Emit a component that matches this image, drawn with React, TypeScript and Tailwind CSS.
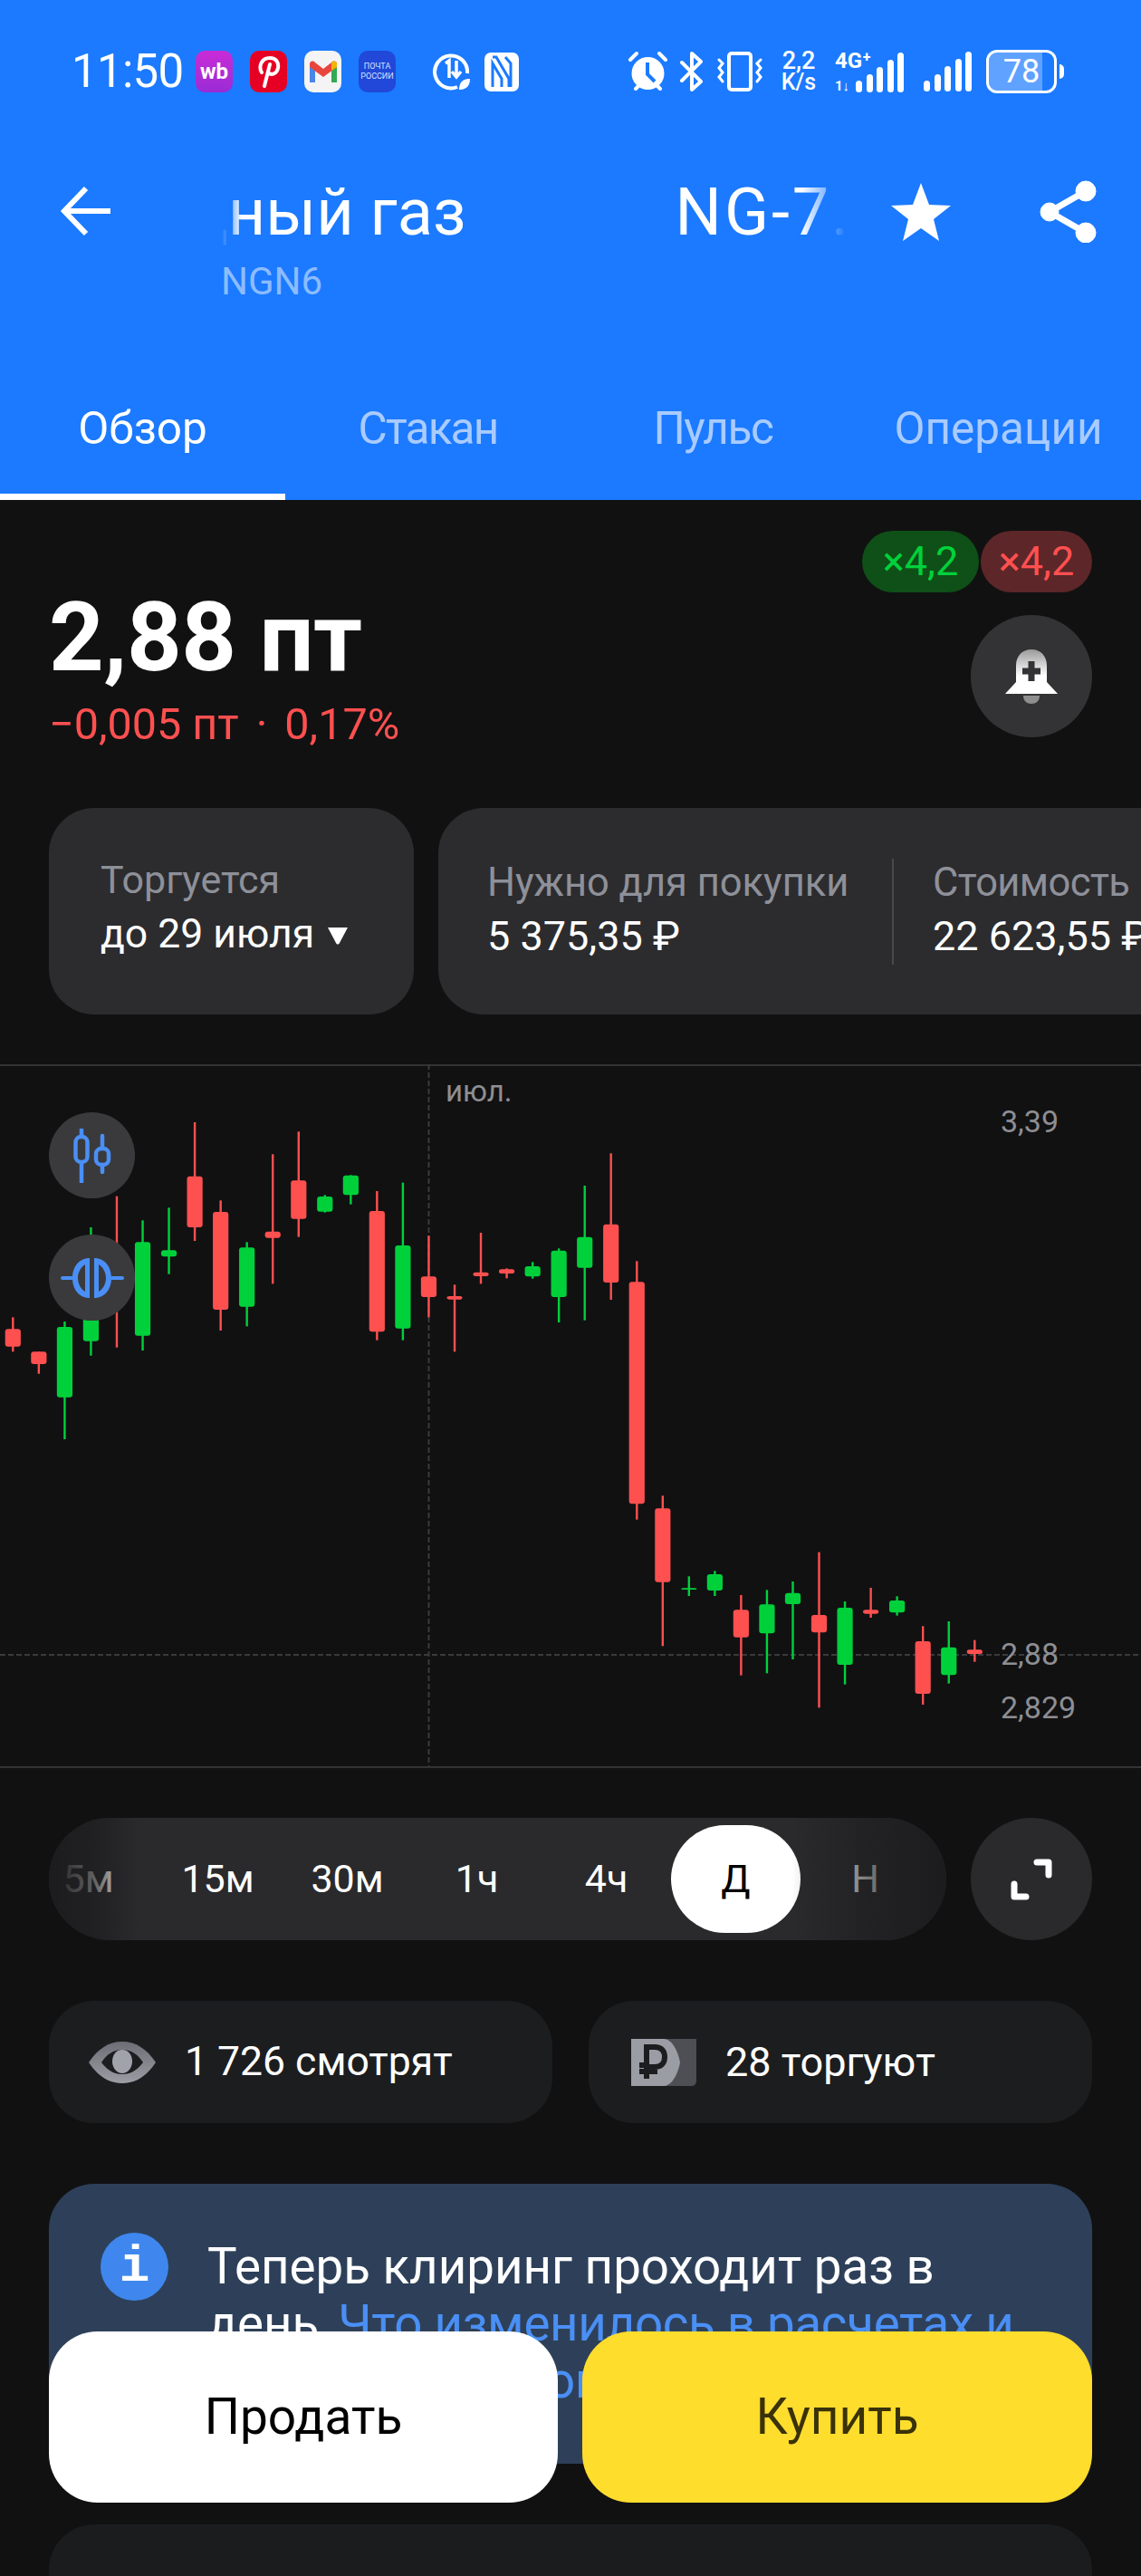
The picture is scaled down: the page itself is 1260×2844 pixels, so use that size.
import React from "react";

type C = [number, number, number, number, number, "r" | "g"];
const RED = "#ff5050";
const GREEN = "#00d13b";

// zoomed coordinates of candles: x*2.45, (y-1160)*3
const A: C[] = [
  [35, 883, 997, 922, 980, "r"],
  [105, 997, 1070, 997, 1038, "r"],
  [175, 897, 1287, 915, 1148, "g"],
  [246, 585, 1010, 780, 962, "g"],
  [316, 482, 983, 700, 800, "r"],
  [386, 562, 993, 634, 944, "g"],
  [457, 520, 740, 661, 682, "g"],
  [527, 237, 630, 416, 585, "r"],
  [597, 496, 927, 534, 858, "r"],
  [668, 634, 913, 652, 848, "g"],
  [738, 343, 772, 599, 620, "r"],
  [808, 268, 617, 430, 557, "r"],
  [879, 478, 536, 483, 533, "g"],
  [949, 412, 509, 413, 478, "g"],
  [1020, 465, 959, 531, 931, "r"],
  [1090, 437, 959, 645, 920, "g"],
  [1160, 613, 883, 748, 816, "r"],
  [1230, 775, 997, 813, 824, "r"],
  [1301, 603, 772, 734, 747, "r"],
  [1371, 721, 754, 724, 738, "r"],
  [1441, 700, 755, 714, 748, "g"],
  [1512, 655, 900, 662, 816, "g"],
];
const B: C[] = [
  [63, 447, 893, 617, 719, "g"],
  [134, 340, 825, 575, 768, "r"],
  [204, 697, 1553, 766, 1501, "r"],
  [274, 1474, 1972, 1516, 1760, "r"],
  [345, 1741, 1806, 1780, 1785, "g"],
  [415, 1723, 1806, 1734, 1788, "g"],
  [486, 1803, 2069, 1852, 1943, "r"],
  [556, 1786, 2062, 1834, 1930, "g"],
  [626, 1758, 2016, 1796, 1833, "g"],
  [697, 1661, 2176, 1869, 1927, "r"],
  [767, 1824, 2099, 1845, 2034, "g"],
  [837, 1779, 1878, 1852, 1865, "r"],
  [908, 1807, 1871, 1821, 1861, "g"],
  [978, 1906, 2166, 1956, 2130, "r"],
  [1048, 1890, 2096, 1976, 2068, "g"],
  [1118, 1952, 2024, 1984, 1998, "r"],
];
const TOP = 1175;
const toY = (y: number) => 1160 + y / 3 - TOP;
const candles = [
  ...A.map((c) => ({ x: c[0] / 2.45, c })),
  ...B.map((c) => ({ x: 620 + c[0] / 2.45, c })),
];

function Chart() {
  return (
    <svg className="absolute left-0 top-[-2px]" width={1260} height={775} viewBox="0 0 1260 775">
      <line x1={473.5} x2={473.5} y1={0} y2={775} stroke="#3a3a3c" strokeWidth={2} strokeDasharray="6 3" />
      <line x1={0} x2={1260} y1={652} y2={652} stroke="#3a3a3c" strokeWidth={2} strokeDasharray="6 3" />
      {candles.map(({ x, c }, i) => {
        const col = c[5] === "r" ? RED : GREEN;
        return (
          <g key={i}>
            <rect x={x - 1.2} width={2.4} y={toY(c[1])} height={toY(c[2]) - toY(c[1])} fill={col} />
            <rect x={x - 8.6} width={17.2} y={toY(c[3])} height={toY(c[4]) - toY(c[3])} rx={3} fill={col} />
          </g>
        );
      })}
    </svg>
  );
}

function StatusLeft() {
  return (
    <div className="flex items-center">
      <span className="w-[118px] text-[51px] leading-[50px] tracking-[-0.7px] text-white">11:50</span>
      <div className="ml-[19px] flex h-[46px] w-[41px] items-center justify-center rounded-[10px] bg-gradient-to-b from-[#c92bd6] to-[#9a2bd6] text-[24px] font-bold leading-none text-white">wb</div>
      <div className="ml-[19px] flex h-[46px] w-[41px] items-center justify-center rounded-[10px] bg-[#e60023]">
        <svg width="26" height="36" viewBox="0 0 26 36" fill="none" stroke="#fff" strokeWidth="4" strokeLinecap="round">
          <path d="M5 19C1 12 5 3 14 3c7 0 10 5 9 11-1 6-7 9-11 5" />
          <path d="M14 10 8 34" />
        </svg>
      </div>
      <div className="ml-[19px] flex h-[46px] w-[41px] items-center justify-center rounded-[10px] bg-[#f4f4f4]">
        <svg width="30" height="24" viewBox="0 0 30 24" fill="none">
          <path d="M0 3v21h6V8z" fill="#4a86e8" />
          <path d="M30 3v21h-6V8z" fill="#34a853" />
          <path d="M0 3c1-3 4-3 6-1l9 7 9-7c2-2 5-2 6 1v4l-15 11L0 7z" fill="#e8453c" />
          <path d="M24 2c2-2 5-2 6 1v4l-6 4z" fill="#f4b400" />
        </svg>
      </div>
      <div className="ml-[19px] flex h-[46px] w-[41px] flex-col items-center justify-center rounded-[10px] bg-[#2148d8] text-[9px] leading-[11px] text-[#d8e0ff]">
        <span>ПОЧТА</span>
        <span>РОССИИ</span>
      </div>
      <svg className="ml-[41px]" width="42" height="44" viewBox="0 0 42 44" fill="none">
        <path d="M27 39A18 18 0 1 1 38 24" stroke="#fff" strokeWidth="4" />
        <path d="M14 13l4-3v19M26 10v17M21 22l5 6 5-6" stroke="#fff" strokeWidth="3.5" />
        <path d="M29 42c0-9 5-12 12-12 0 8-4 12-12 12z" fill="#fff" />
      </svg>
      <svg className="ml-[15px]" width="38" height="43" viewBox="0 0 38 43" fill="none">
        <rect x="0" y="0" width="38" height="43" rx="7" fill="#fff" />
        <path d="M9 5h4l14 24v9M29 38V12L23 5M9 38V12l10 17v9" stroke="#1b7aff" strokeWidth="3" />
      </svg>
    </div>
  );
}

function Bars({ h, w = 8, gap = 5 }: { h: number[]; w?: number; gap?: number }) {
  return (
    <div className="flex items-end" style={{ gap }}>
      {h.map((x, i) => (
        <div key={i} className="rounded-full bg-white" style={{ height: x, width: w }} />
      ))}
    </div>
  );
}

function StatusRight() {
  return (
    <div className="flex items-center">
      <svg width="43" height="46" viewBox="0 0 43 46" fill="none">
        <circle cx="21.5" cy="25" r="18" fill="#fff" />
        <path d="M21 13v13l8 8" stroke="#1b7aff" strokeWidth="4" />
        <path d="M2 10 9 3M41 10 34 3M8 42l4-4M35 42l-4-4" stroke="#fff" strokeWidth="4" strokeLinecap="round" />
      </svg>
      <svg className="ml-[13px]" width="27" height="46" viewBox="0 0 27 46" fill="none" stroke="#fff" strokeWidth="4" strokeLinejoin="round" strokeLinecap="round">
        <path d="M3 13l21 21-10 9V3l10 9L3 33" />
      </svg>
      <svg className="ml-[15px]" width="50" height="46" viewBox="0 0 50 46" fill="none" stroke="#fff" strokeWidth="3.5" strokeLinecap="round">
        <rect x="13" y="3" width="24" height="40" rx="3" strokeWidth="4" />
        <path d="M2 10l4 4-4 5 4 5-4 5 4 5M48 10l-4 4 4 5-4 5 4 5-4 5" strokeWidth="3" />
      </svg>
      <div className="ml-[19px] flex w-[42px] flex-col items-center text-white">
        <span className="text-[27px] font-medium leading-[24px]">2,2</span>
        <span className="text-[25px] font-medium leading-[24px]">K/s</span>
      </div>
      <div className="relative ml-[19px] h-[46px] w-[76px]">
        <span className="absolute left-0 top-[-2px] text-[24px] font-bold leading-[26px] text-white">4G⁺</span>
        <span className="absolute bottom-[-1px] left-0 text-[15px] font-bold leading-[16px] text-white">1↓</span>
        <div className="absolute bottom-0 right-0">
          <Bars h={[13, 20, 28, 36, 44]} w={7} gap={4.5} />
        </div>
      </div>
      <div className="ml-[22px]">
        <Bars h={[12, 19, 28, 36, 44]} w={7} gap={4.5} />
      </div>
      <div className="relative ml-[16px] h-[48px] w-[78px] overflow-hidden rounded-[12px] border-[3px] border-white">
        <div className="h-full w-[59px] bg-white/30" />
        <span className="absolute inset-0 flex items-center justify-center text-[36px] leading-none text-white">78</span>
      </div>
      <div className="ml-[3px] h-[16px] w-[5px] rounded-r-full bg-white" />
    </div>
  );
}

function Header() {
  const tab = "relative flex h-[107px] w-[315px] items-start justify-center text-[49.5px] leading-[56px]";
  return (
    <header className="flex h-[552px] flex-col bg-[#1b7aff]">
      <div className="mt-[56px] flex h-[46px] items-center justify-between pl-[79px] pr-[85px]">
        <StatusLeft />
        <StatusRight />
      </div>
      <div className="mt-[95px] flex h-[140px] items-start pl-[62px]">
        <svg className="mt-[7px] shrink-0" width="62" height="58" viewBox="0 0 62 58" fill="none" stroke="#fff" strokeWidth="6">
          <path d="M33 4 9 29l24 25M9 29h51" />
        </svg>
        <div className="ml-[121px] w-[690px] shrink-0">
          <div className="overflow-hidden whitespace-nowrap text-[72px] leading-[76px] text-white [mask-image:linear-gradient(90deg,transparent_0,#000_22px,#000_640px,transparent_690px)]">
            <div className="ml-[-249px] flex">
              <span>Природный газ</span>
              <span className="ml-[231px] tracking-[3px]">NG-7.26</span>
            </div>
          </div>
          <div className="ml-[-1px] mt-[13px] text-[42px] leading-[50px] text-[#8cbcff]">NGN6</div>
        </div>
        <svg className="ml-[48px] mt-[5px] shrink-0" width="68" height="64" viewBox="0 0 68 64" fill="#fff">
          <path d="M34 0 43 24 67 25 48 40 54 64 34 50 14 64 20 40 1 25 25 24z" />
        </svg>
        <svg className="ml-[97px] mt-[1px] shrink-0" width="64" height="70" viewBox="0 0 64 70" fill="#fff" stroke="#fff">
          <circle cx="51" cy="13" r="11" />
          <circle cx="11" cy="36" r="10" />
          <circle cx="51" cy="59" r="11" />
          <path d="M51 13 11 36l40 23" fill="none" strokeWidth="7" />
        </svg>
      </div>
      <div className="mt-auto flex">
        <div className={tab + " text-white"}>
          Обзор
          <div className="absolute bottom-0 left-0 h-[7px] w-full bg-white" />
        </div>
        <div className={tab + " tracking-[-1.8px] text-[#a9cbff]"}>Стакан</div>
        <div className={tab + " tracking-[-1.4px] text-[#a9cbff]"}>Пульс</div>
        <div className={tab + " text-[#a9cbff]"}>Операции</div>
      </div>
    </header>
  );
}

function Price() {
  return (
    <section className="flex h-[340px] justify-between px-[54px] pt-[34px]">
      <div className="pt-[57px]">
        <div className="text-[106px] font-bold leading-[122px] tracking-[-0.5px] text-white">2,88 пт</div>
        <div className="mt-[7px] flex text-[48.5px] leading-[56px] text-[#ff5050]">
          <span>−0,005 пт</span>
          <span className="ml-[19px]">·</span>
          <span className="ml-[19px]">0,17%</span>
        </div>
      </div>
      <div className="flex flex-col items-end">
        <div className="flex gap-[2px]">
          <div className="flex h-[68px] w-[129px] items-center justify-center rounded-[34px] bg-[#0e5017] text-[45px] text-[#00d13b]">×4,2</div>
          <div className="flex h-[68px] w-[123px] items-center justify-center rounded-[34px] bg-[#5d2628] text-[45px] text-[#ff5050]">×4,2</div>
        </div>
        <div className="mt-[25px] flex h-[135px] w-[134px] items-center justify-center rounded-full bg-[#333335]">
          <svg width="60" height="60" viewBox="0 0 60 60">
            <defs>
              <linearGradient id="bell" x1="0" y1="0" x2="0" y2="1">
                <stop offset="0" stopColor="#9a9a9a" />
                <stop offset="0.6" stopColor="#fff" />
              </linearGradient>
            </defs>
            <path d="M30 0c-11 0-17 8-17 18v18L1 49h58L47 36V18C47 8 41 0 30 0z" fill="url(#bell)" />
            <path d="M30 13v22M20 24h20" stroke="#333335" strokeWidth="7" />
            <path d="M21 51h18c0 6-4 9-9 9s-9-3-9-9z" fill="#8e8e8e" />
          </svg>
        </div>
      </div>
    </section>
  );
}

function Info() {
  return (
    <section className="flex h-[228px] gap-[27px] overflow-hidden pl-[54px]">
      <div className="w-[403px] shrink-0 rounded-[50px] bg-[#2c2c2e] pl-[57px] pt-[53px]">
        <div className="text-[43px] leading-[53px] text-[#8e9099]">Торгуется</div>
        <div className="mt-[7px] flex items-center text-[44.5px] leading-[53px] text-white">
          до 29 июля
          <svg className="ml-[14px] mt-[3px]" width="24" height="20" viewBox="0 0 24 20" fill="#fff"><path d="M1 1h22L14 18c-1 2-3 2-4 0z" /></svg>
        </div>
      </div>
      <div className="flex w-[900px] shrink-0 items-center rounded-[50px] bg-[#2c2c2e] pb-[4px] pl-[54px]">
        <div className="w-[447px] shrink-0">
          <div className="text-[43.5px] leading-[53px] text-[#8e9099]">Нужно для покупки</div>
          <div className="mt-[6px] text-[45px] leading-[53px] text-white">5 375,35 ₽</div>
        </div>
        <div className="mt-[4px] h-[117px] w-[2px] shrink-0 bg-[#48484a]" />
        <div className="ml-[43px] whitespace-nowrap">
          <div className="text-[43.5px] leading-[53px] tracking-[-0.6px] text-[#8e9099]">Стоимость</div>
          <div className="mt-[6px] text-[45px] leading-[53px] text-white">22 623,55 ₽</div>
        </div>
      </div>
    </section>
  );
}

function ChartSection() {
  return (
    <section className="relative mt-[55px] h-[777px] border-y-2 border-[#333335]">
      <Chart />
      <span className="absolute left-[492px] top-[8px] text-[33px] leading-[40px] text-[#8e8e93]">июл.</span>
      <span className="absolute left-[1105px] top-[41px] text-[34px] leading-[40px] text-[#8e8e93]">3,39</span>
      <span className="absolute left-[1105px] top-[629px] text-[34px] leading-[40px] text-[#8e8e93]">2,88</span>
      <span className="absolute left-[1105px] top-[688px] text-[34px] leading-[40px] text-[#8e8e93]">2,829</span>
      <div className="absolute left-[54px] top-[51px] flex h-[95px] w-[95px] items-center justify-center rounded-full bg-[#3a3a3c]">
        <svg width="44" height="60" viewBox="0 0 44 60" fill="none" stroke="#4a8ff5" strokeWidth="4.5" strokeLinecap="round">
          <path d="M10 1v8M10 37v22M33 8v14M33 40v8" />
          <rect x="3.5" y="9" width="13" height="28" rx="6" />
          <rect x="26" y="22" width="14" height="18" rx="6" />
        </svg>
      </div>
      <div className="absolute left-[54px] top-[186px] flex h-[95px] w-[95px] items-center justify-center rounded-full bg-[#3a3a3c]">
        <svg width="70" height="44" viewBox="0 0 70 44" fill="#4a8ff5">
          <path d="M0 20h14v4H2a2 2 0 0 1 0-4zM56 20h12a2 2 0 0 1 0 4H56z" />
          <path d="M32 0v44C20 44 13 34 13 22S20 0 32 0zM27 7c-5 3-8 9-8 15s3 12 8 15z" fillRule="evenodd" />
          <path d="M37 0v44c12 0 19-10 19-22S49 0 37 0zM42 7c5 3 8 9 8 15s-3 12-8 15z" fillRule="evenodd" />
        </svg>
      </div>
    </section>
  );
}

const TF = ["5м", "15м", "30м", "1ч", "4ч", "Д", "Н"];

function Timeframes() {
  return (
    <section className="mt-[55px] flex justify-between px-[54px]">
      <div className="relative flex h-[135px] w-[991px] items-center overflow-hidden rounded-[68px] bg-[#2a2a2c]">
        <div className="ml-[-28px] flex">
          {TF.map((t) => (
            <div
              key={t}
              className={
                "flex h-[119px] w-[143px] shrink-0 items-center justify-center rounded-full text-[43px] leading-none " +
                (t === "Д" ? "bg-white text-black" : "text-white")
              }
            >
              {t}
            </div>
          ))}
        </div>
        <div className="absolute inset-y-0 left-0 w-[100px] bg-gradient-to-r from-[#1c1c1e] via-[#1c1c1e]/70 to-transparent" />
        <div className="absolute inset-y-0 right-0 w-[170px] bg-gradient-to-l from-[#1c1c1e] via-[#1c1c1e]/60 to-transparent" />
      </div>
      <div className="flex h-[135px] w-[134px] items-center justify-center rounded-full bg-[#2a2a2c]">
        <svg width="48" height="48" viewBox="0 0 48 48" fill="none" stroke="#fff" strokeWidth="7" strokeLinecap="round" strokeLinejoin="round">
          <path d="M30 5h13v14M5 29v14h13" />
        </svg>
      </div>
    </section>
  );
}

function Stats() {
  return (
    <section className="mt-[67px] flex gap-[40px] px-[54px]">
      <div className="flex h-[135px] w-[556px] items-center rounded-[50px] bg-[#1c1d1f] pl-[44px]">
        <svg width="74" height="46" viewBox="0 0 74 46">
          <defs>
            <linearGradient id="eye" x1="0" y1="0" x2="0" y2="1">
              <stop offset="0" stopColor="#6b6e75" />
              <stop offset="1" stopColor="#9a9da4" />
            </linearGradient>
          </defs>
          <path d="M0 23C10 8 22 0 37 0s27 8 37 23C64 38 52 46 37 46S10 38 0 23z" fill="url(#eye)" />
          <path d="M14 23c6-9 13-14 23-14s17 5 23 14c-6 8-13 13-23 13S20 31 14 23z" fill="#1c1d1f" />
          <path d="M37 9c-7 0-11 6-11 13s5 13 11 13 11-6 11-13S44 9 37 9z" fill="#a0a3aa" />
        </svg>
        <span className="ml-[32px] text-[44.5px] leading-none text-white">1 726 смотрят</span>
      </div>
      <div className="flex h-[135px] w-[556px] items-center rounded-[50px] bg-[#1c1d1f] pl-[47px]">
        <svg width="72" height="52" viewBox="0 0 72 52">
          <path d="M20 0h52v46q0 6-6 6H20z" fill="#4d4f55" />
          <path d="M0 0h36c9 0 16 14 18 26-2 12-9 26-18 26H0z" fill="#9a9da4" />
          <path d="M17 31V9h9c7 0 11 4 11 11s-4 11-11 11zM17 31v13M9 36h20M9 29h8" fill="none" stroke="#1c1d1f" strokeWidth="6" />
        </svg>
        <span className="ml-[32px] text-[45px] leading-none text-white">28 торгуют</span>
      </div>
    </section>
  );
}

function Notice() {
  return (
    <section className="mx-[54px] mt-[67px] flex h-[309px] overflow-hidden rounded-[50px] bg-[#2e4059] pl-[57px] pt-[54px]">
      <div className="flex h-[75px] w-[75px] shrink-0 items-center justify-center rounded-full bg-[#3f87ee] font-['Liberation_Mono',monospace] text-[56px] font-bold leading-none text-white">i</div>
      <p className="ml-[43px] mt-[6px] w-[930px] text-[54.7px] leading-[63px] text-white">
        Теперь клиринг проходит раз в день. <span className="ml-[-7px] tracking-[-0.3px] text-[#4a8ff5]">Что изменилось в расчетах и при клиринговом сборе</span>
      </p>
    </section>
  );
}

export default function App() {
  return (
    <div className="relative h-[2844px] w-[1260px] overflow-hidden bg-[#111112] font-['Roboto',sans-serif]">
      <Header />
      <Price />
      <Info />
      <ChartSection />
      <Timeframes />
      <Stats />
      <Notice />
      <div className="mx-[54px] mt-[67px] h-[200px] rounded-[50px] bg-[#1b1c1e]" />
      <div className="absolute left-[54px] top-[2574px] flex w-[1152px] gap-[27px]">
        <button className="h-[189px] w-[562px] rounded-[54px] bg-white text-[55px] text-black">Продать</button>
        <button className="h-[189px] w-[563px] rounded-[54px] bg-[#ffdd2d] text-[55px] text-[#3a3208]">Купить</button>
      </div>
    </div>
  );
}
